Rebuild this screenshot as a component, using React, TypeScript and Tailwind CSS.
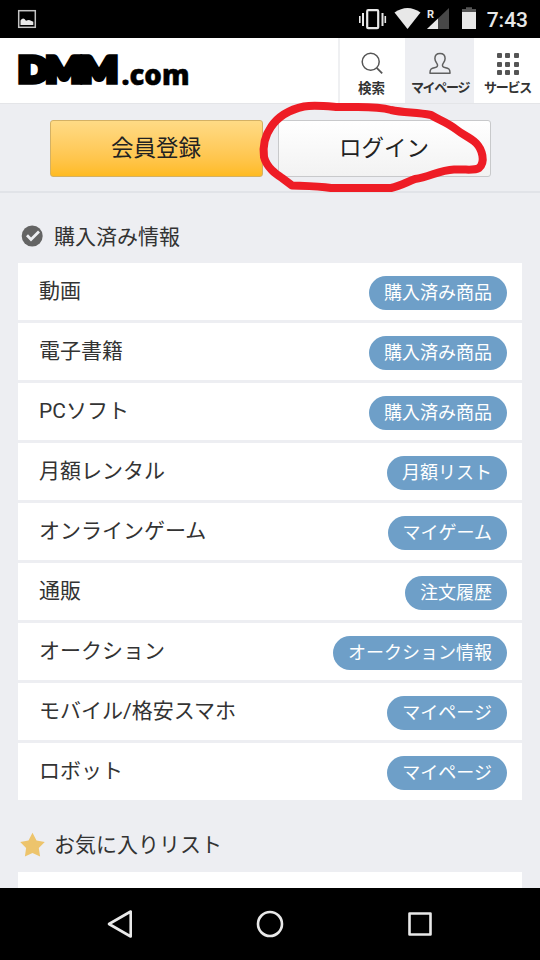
import React from "react";

const rows = [
  { name: "動画", action: "購入済み商品" },
  { name: "電子書籍", action: "購入済み商品" },
  { name: "PCソフト", action: "購入済み商品" },
  { name: "月額レンタル", action: "月額リスト" },
  { name: "オンラインゲーム", action: "マイゲーム" },
  { name: "通販", action: "注文履歴" },
  { name: "オークション", action: "オークション情報" },
  { name: "モバイル/格安スマホ", action: "マイページ" },
  { name: "ロボット", action: "マイページ" },
];

function StatusBar() {
  return (
    <div className="flex h-[38px] shrink-0 items-center justify-between bg-black pl-[17px] pr-3 text-[#e8e8e8]">
      <svg width="20" height="20" viewBox="0 0 20 20">
        <rect x="1.7" y="1.7" width="16.6" height="16.6" fill="none" stroke="#c4c4c4" strokeWidth="1.5" />
        <path d="M3.500 16V11.500q2-3 4-1.500l1.500 1.800q3-1.500 5 0l2.300 1V16z" fill="#e8e8e8" />
      </svg>
      <div className="flex items-center">
        <svg width="128" height="38" viewBox="355 0 128 38" fill="#e8e8e8">
          <rect x="366.200" y="10.200" width="11" height="18" rx="1" fill="none" stroke="#e8e8e8" strokeWidth="2.200" />
          <path d="M361 13h2v13h-2zM358 16h1.600v7H358zM380.500 13h2v13h-2zM383.500 16h1.600v7h-1.600z" />
          <path d="M393.500 12.500q13-9 26 0L406.500 29z" />
          <path d="M448 8v21h-22z" fill="#484848" />
          <path d="M437 18.500V29h-11z" />
          <text x="426" y="18" className="font-['Roboto'] text-[11px] font-bold">R</text>
          <path d="M461 12V9h4V7.300h6V9h4v3z" fill="#555" />
          <path d="M461 12h14v17h-14z" />
        </svg>
        <span className="ml-[3px] pt-px font-['Roboto'] text-[21px] font-medium leading-[38px]">7:43</span>
      </div>
    </div>
  );
}

function Logo() {
  return (
    <svg className="overflow-visible" width="192" height="65" viewBox="0 38 192 65" role="img" aria-label="DMM.com">
      <g stroke="#000" strokeWidth="5.500" fontSize="34" className="font-['Lato'] font-black">
        <text x="18.500" y="82.200" textLength="30" lengthAdjust="spacingAndGlyphs">D</text>
        <text x="46" y="82.200" textLength="36" lengthAdjust="spacingAndGlyphs">M</text>
        <text x="80.500" y="82.200" textLength="37" lengthAdjust="spacingAndGlyphs">M</text>
      </g>
      <text x="121.500" y="84.500" fontSize="29" stroke="#000" strokeWidth=".5" textLength="68" lengthAdjust="spacingAndGlyphs" className="font-['Open_Sans'] font-extrabold">.com</text>
    </svg>
  );
}

function Header() {
  return (
    <header className="flex h-[66px] shrink-0 justify-between border-b border-[#e4e5e8] bg-white text-[#333]">
      <Logo />
      <nav className="flex text-[13.500px] font-bold leading-[18px]">
        <div className="flex w-[67px] flex-col items-center border-l-2 border-[#eff0f2] pr-[2px] pt-[13px]">
          <svg width="24" height="24" viewBox="0 0 24 24" fill="none" stroke="#555" strokeWidth="1.500">
            <circle cx="10.700" cy="10.700" r="8.500" />
            <path d="m16.700 16.900 5.500 5.500" strokeWidth="1.800" />
          </svg>
          <span className="mt-[4px]">検索</span>
        </div>
        <div className="flex w-[69px] flex-col items-center bg-[#edeef2] pt-[13px]">
          <svg width="24" height="24" viewBox="0 0 24 24" fill="none" stroke="#606060" strokeWidth="1.500" strokeLinejoin="round">
            <path d="M12 2.500c-3.300 0-5.100 2.200-5.100 5 0 3 1.900 4.100 2.500 6 .5 1.700-.4 2.600-2.200 3-4 .9-5.200 1.400-5.200 5.200v.5h20v-.5c0-3.800-1.200-4.300-5.200-5.200-1.800-.4-2.700-1.300-2.200-3 .6-1.900 2.500-3 2.500-6 0-2.800-1.800-5-5.100-5Z" />
          </svg>
          <span className="mt-[4px] whitespace-nowrap pl-[1px] text-[13px] tracking-[-1.300px]">マイページ</span>
        </div>
        <div className="flex w-[66px] flex-col items-center pl-px pt-[15px]">
          <div className="grid h-[22px] w-[22px] grid-cols-3 gap-[3.500px]">
            {Array.from({ length: 9 }, (_, i) => (
              <i key={i} className="rounded-[1px] bg-[#555]" />
            ))}
          </div>
          <span className="mt-[4px] whitespace-nowrap text-[13px] tracking-[-1.200px]">サービス</span>
        </div>
      </nav>
    </header>
  );
}

function Account() {
  return (
    <div className="relative flex h-[89px] shrink-0 justify-center gap-[15px] border-b-2 border-[#e1e3e8] pt-[15.500px] text-[22.500px] text-[#222]">
      <button className="h-[57px] w-[213px] rounded-[3px] border-[1.500px] border-[#d4b164] bg-gradient-to-b from-[#ffdb85] to-[#ffbb20] pt-[2px]">会員登録</button>
      <button className="h-[57px] w-[213px] rounded-[3px] border-[1.500px] border-[#c8c9cb] bg-gradient-to-b from-white to-[#f2f2f2] pt-[2px]">ログイン</button>
      <svg className="absolute left-0 top-[-8px]" width="540" height="104" viewBox="0 96 540 104" fill="none">
        <path d="M304 106.500C288 110 277 118 271 127C264 137 263 149 264 157C267 168 276 174 282 178L292 185.500C306 186 318 186 331 188H391C400 186 407 182 415 179C430 177 439 170 454 169.500C467 169 474 171 479 168C486 162 482 149 476 143C470 137 463 135 457 130C447 122 439 120 431 115C416 112 404 113 391 110C380 107 371 107 358 107H336C324 106 314 105 304 106.500Z" stroke="#ee1c25" strokeWidth="8" strokeLinejoin="round" />
      </svg>
    </div>
  );
}

function NavigationBar() {
  return (
    <div className="flex h-[72px] shrink-0 items-center justify-center bg-black">
      <svg width="340" height="32" viewBox="100 908 340 32" fill="none" stroke="#e9e9e9" strokeWidth="2.600" strokeLinejoin="round">
        <path d="M130.700 911.500v25l-21.700-12.500z" />
        <circle cx="270" cy="924" r="12" />
        <path d="M409.500 913.500h21v21h-21z" />
      </svg>
    </div>
  );
}

export default function App() {
  return (
    <div className="flex h-[960px] w-[540px] flex-col overflow-hidden bg-[#edeef2] font-['Roboto','Noto_Sans_CJK_JP',sans-serif] text-[#333]">
      <StatusBar />
      <Header />
      <Account />
      <main className="min-h-0 flex-1 overflow-hidden px-[18px]">
        <h2 className="flex h-[70px] items-center gap-[11px] pl-[3px] pt-[16px] text-[21px] leading-[30px]">
          <svg width="22" height="22" viewBox="0 0 22 22">
            <circle cx="11.200" cy="11" r="10.500" fill="#646464" />
            <path d="m6 10.300 4 4.100 8-8" fill="none" stroke="#edeef2" strokeWidth="2.800" />
          </svg>
          <span className="pt-[2px]">購入済み情報</span>
        </h2>
        <ul className="flex flex-col gap-[3px] pt-[0.400px]">
          {rows.map((row) => (
            <li key={row.name} className="flex h-[57px] items-center justify-between bg-white pl-[21px] pr-[15px]">
              <span className="pb-[2px] text-[21px] leading-[30px]">{row.name}</span>
              <span className="mt-[2px] h-[34.500px] rounded-full bg-[#6e9fc8] px-[15px] text-[18px] leading-[33px] text-white">{row.action}</span>
            </li>
          ))}
        </ul>
        <h2 className="flex h-[72px] items-center gap-[9px] pl-[2px] pt-[17px] text-[21px] leading-[30px]">
          <svg width="25" height="25" viewBox="0 0 25 25" fill="#edc46c">
            <path d="m12.500.8 4 7.700 8.300 1.400-6 6.200 1.300 8.400-7.600-3.400-7.600 3.400 1.200-8.400L.2 9.900l8.300-1.400z" />
          </svg>
          <span className="pt-px">お気に入りリスト</span>
        </h2>
        <div className="h-[57px] bg-white" />
      </main>
      <NavigationBar />
    </div>
  );
}
